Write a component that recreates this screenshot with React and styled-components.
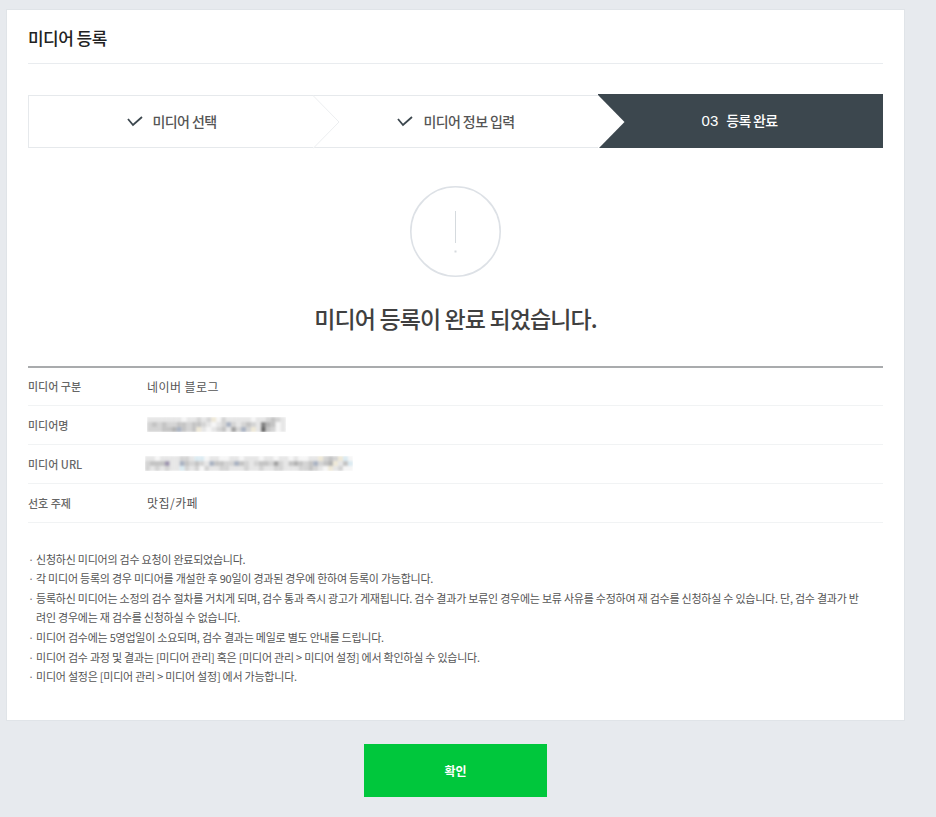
import React from 'react';
import styled, { createGlobalStyle } from 'styled-components';

const Global = createGlobalStyle`
  html, body { margin: 0; padding: 0; background: #e7eaee; }
  body { font-family: "Noto Sans CJK KR", "Noto Sans", sans-serif; color: #333; width: 936px; height: 817px; overflow: hidden; }
`;
const Page = styled.div`
  padding: 9px 31px 0 6px;
  display: flex;
  flex-direction: column;
  align-items: center;
`;
const Card = styled.section`
  box-sizing: border-box;
  width: 899px;
  height: 712px;
  background: #fff;
  border: 1px solid #e0e4e8;
  padding: 0 21px;
`;
const Title = styled.h1`
  margin: 0;
  height: 54px;
  box-sizing: border-box;
  padding-top: 15px;
  font-size: 17px;
  line-height: 26px;
  font-weight: 500;
  color: #222;
  letter-spacing: -0.55px;
  border-bottom: 1px solid #e9ecef;
`;
const Steps = styled.ol`
  list-style: none;
  margin: 30px 0 0;
  padding: 0;
  display: grid;
  grid-template-columns: 286px 284px 285px;
  height: 54px;
`;
const Step = styled.li`
  position: relative;
  box-sizing: border-box;
  display: flex;
  align-items: center;
  justify-content: center;
  gap: 10px;
  font-size: 14px;
  font-weight: 500;
  letter-spacing: -0.6px;
  color: #555;
  background: #fff;
  margin-top: 1px;
  height: 53px;
  padding-bottom: 2px;
  border-style: solid;
  border-color: #e6e9ec;
  border-width: 1px 0 1px ${p => (p.$first ? '1px' : '0')};
`;
const ActiveStep = styled.li`
  display: flex;
  align-items: center;
  justify-content: center;
  gap: 8px;
  height: 54px;
  padding: 0 2px 2px 0;
  box-sizing: border-box;
  font-size: 14px;
  font-weight: 500;
  letter-spacing: -0.7px;
  color: #fff;
  background: #3c474e;
`;
const Arrow = styled.svg`
  position: absolute;
  left: calc(100% - ${p => p.$inset}px);
  top: -1px;
  width: 27px;
  height: 54px;
  z-index: 2;
  display: block;
`;
const StepNum = styled.span`
  font-family: "Liberation Sans", sans-serif;
  font-weight: 400;
  font-size: 15px;
  letter-spacing: 0;
`;
const Alert = styled.div`
  display: flex;
  flex-direction: column;
  align-items: center;
  padding-top: 38px;
`;
const AlertIcon = styled.svg`
  display: block;
  width: 91px;
  height: 91px;
`;
const Heading = styled.h2`
  margin: 24px 0 0;
  font-size: 23px;
  line-height: 34px;
  font-weight: 500;
  color: #404040;
  letter-spacing: -0.88px;
`;
const Table = styled.dl`
  margin: 31px 0 0;
  border-top: 2px solid #a9abad;
`;
const Row = styled.div`
  display: grid;
  grid-template-columns: 119px 1fr;
  align-items: center;
  height: 39px;
  padding-bottom: 1px;
  box-sizing: border-box;
  border-bottom: 1px solid #f1f3f4;
  &:first-child { height: 38px; }
`;
const Label = styled.dt`
  font-size: 11px;
  font-weight: 500;
  color: #666;
`;
const Value = styled.dd`
  margin: 0;
  font-size: 12px;
  color: #555;
  letter-spacing: 0.45px;
`;
const Mosaic = styled.svg`
  display: block;
  margin-left: ${p => p.$x || 0}px;
`;
const Notes = styled.ul`
  list-style: none;
  margin: 26.7px 0 0;
  padding: 0 20px 0 8px;
`;
const Note = styled.li`
  position: relative;
  font-size: 11px;
  line-height: 19.6px;
  color: #555;
  letter-spacing: -0.235px;
  &::before {
    content: '·';
    position: absolute;
    left: -8px;
    top: 0;
    color: #777;
  }
`;
const Confirm = styled.button`
  margin-top: 23px;
  width: 183px;
  height: 53px;
  border: 0;
  background: #00c73c;
  color: #fff;
  font-family: inherit;
  font-size: 12px;
  font-weight: 700;
`;
const Line = styled.span`
  display: block;
  white-space: nowrap;
`;

const Check = () => (
  <svg width="16" height="12" viewBox="0 0 16 12" fill="none" aria-hidden="true">
    <path d="M1 4 L6 10 L15 2" stroke="#3c474e" strokeWidth="1.8" />
  </svg>
);

const palette = {
  f: '#f6f6f6', e: '#e6e6e6', d: '#d4d4d4', c: '#c4c4c4', b: '#b4b4b4', a: '#a4a4a4', 8: '#848484', 7: '#6c6c6c',
  B: '#aab3c2', P: '#a098b0', Y: '#efe9d8', L: '#dcebf2',
};
const nameRows = [
  'eeeeeeefeededYfdeeeeefeedcde',
  'dcdcddccdccdefedBdedcde8bcfe',
  'dddccbBcdcYefedceadBdYe7cdfe',
];
const urlRows = [
  'eefeeeeddeLLfeeffeefeeefeefeefeffeeYdcdYLf',
  'dcccPeeBcdcdeBccddBcdedccdadecbcdcBdcbYecL',
  'dededeeLdedfdeeddeeedeedeeddeeeddcdefYedff',
];
const Blurred = ({ rows, x }) => {
  const cell = 4.95;
  const w = Math.round(rows[0].length * cell);
  return (
    <Mosaic $x={x} width={w} height="15" viewBox={`0 0 ${w} 15`} aria-hidden="true">
      <defs><filter id={`m${w}`} x="-5%" y="-20%" width="110%" height="140%"><feGaussianBlur stdDeviation="1.1" /></filter></defs>
      <g filter={`url(#m${w})`}>
        {rows.map((row, r) => [...row].map((ch, i) => (
          <rect key={`${r}-${i}`} x={i * cell} y={r * 5} width={cell + 0.1} height="5.1" fill={palette[ch]} />
        )))}
      </g>
    </Mosaic>
  );
};

export default function App() {
  return (
    <Page>
      <Global />
      <Card>
        <Title>미디어 등록</Title>
        <Steps>
          <Step $first>
            <Check />미디어 선택
            <Arrow $inset={1} viewBox="0 0 27 54" aria-hidden="true">
              <path d="M0 0.5 L26 27 L0 53.5" fill="#fff" stroke="#eceef0" />
            </Arrow>
          </Step>
          <Step>
            <Check />미디어 정보 입력
            <Arrow $inset={0} viewBox="0 0 27 54" aria-hidden="true">
              <path d="M0 0 L26.5 27 L0 54 Z" fill="#fff" />
            </Arrow>
          </Step>
          <ActiveStep><StepNum>03</StepNum>등록 완료</ActiveStep>
        </Steps>
        <Alert>
          <AlertIcon viewBox="0 0 91 91" aria-hidden="true">
            <circle cx="45.5" cy="45.5" r="44.7" fill="none" stroke="#dde1e6" strokeWidth="1.6" />
            <rect x="45" y="25" width="1" height="32" fill="#d5dade" />
            <rect x="44.5" y="64.5" width="2" height="2" fill="#d5dade" />
          </AlertIcon>
          <Heading>미디어 등록이 완료 되었습니다.</Heading>
        </Alert>
        <Table>
          <Row><Label>미디어 구분</Label><Value>네이버 블로그</Value></Row>
          <Row><Label>미디어명</Label><Value><Blurred rows={nameRows} /></Value></Row>
          <Row><Label>미디어 URL</Label><Value><Blurred rows={urlRows} x={-2} /></Value></Row>
          <Row><Label>선호 주제</Label><Value>맛집/카페</Value></Row>
        </Table>
        <Notes>
          <Note>신청하신 미디어의 검수 요청이 완료되었습니다.</Note>
          <Note>각 미디어 등록의 경우 미디어를 개설한 후 90일이 경과된 경우에 한하여 등록이 가능합니다.</Note>
          <Note>
            <Line>등록하신 미디어는 소정의 검수 절차를 거치게 되며, 검수 통과 즉시 광고가 게재됩니다. 검수 결과가 보류인 경우에는 보류 사유를 수정하여 재 검수를 신청하실 수 있습니다. 단, 검수 결과가 반</Line>
            <Line>려인 경우에는 재 검수를 신청하실 수 없습니다.</Line>
          </Note>
          <Note>미디어 검수에는 5영업일이 소요되며, 검수 결과는 메일로 별도 안내를 드립니다.</Note>
          <Note>미디어 검수 과정 및 결과는 [미디어 관리] 혹은 [미디어 관리 &gt; 미디어 설정] 에서 확인하실 수 있습니다.</Note>
          <Note>미디어 설정은 [미디어 관리 &gt; 미디어 설정] 에서 가능합니다.</Note>
        </Notes>
      </Card>
      <Confirm>확인</Confirm>
    </Page>
  );
}
